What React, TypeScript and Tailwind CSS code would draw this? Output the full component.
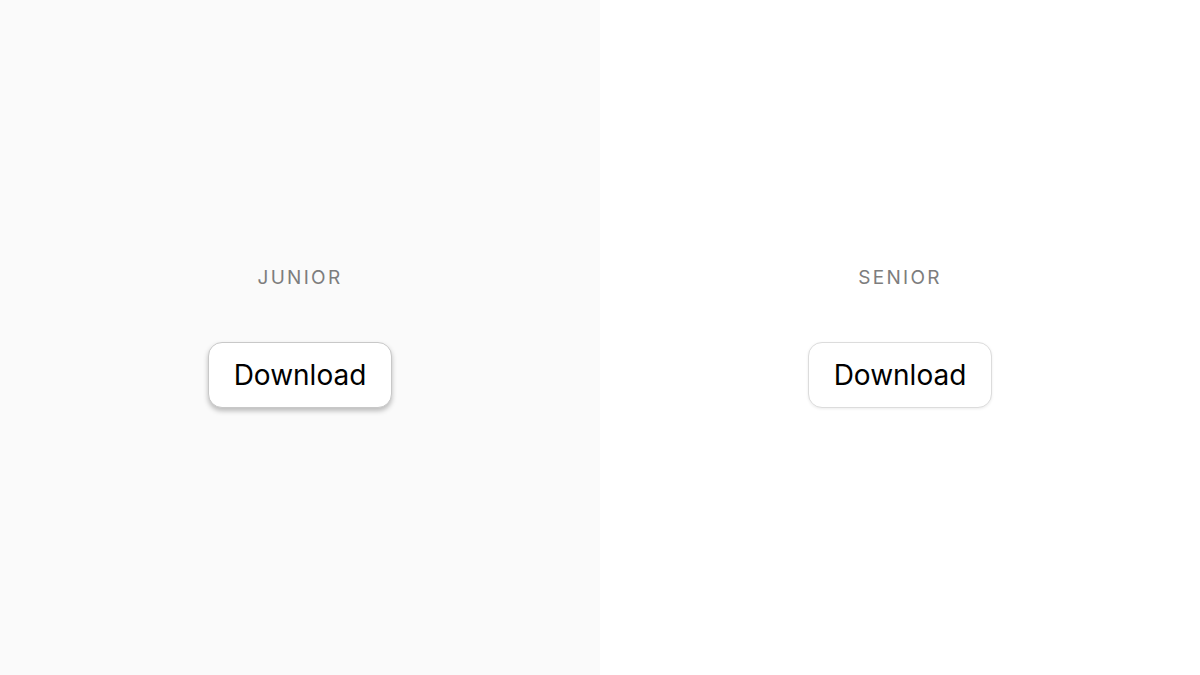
export default function App() {
  return (
    <div className="flex h-[675px] w-[1200px] font-['Inter',sans-serif]">
      <section className="flex w-1/2 flex-col items-center justify-center bg-[#fafafa] pb-[5px]">
        <p className="text-[19px] leading-8 tracking-[0.12em] text-[#7d7d7d]">JUNIOR</p>
        <button className="mt-[48px] rounded-[14px] border border-[#c8c8c8] bg-white px-[25px] py-4 text-[28px] leading-[32px] text-black shadow-[0_3px_5px_rgba(0,0,0,0.25)]">
          Download
        </button>
      </section>
      <section className="flex w-1/2 flex-col items-center justify-center bg-white pb-[5px]">
        <p className="text-[19px] leading-8 tracking-[0.12em] text-[#7d7d7d]">SENIOR</p>
        <button className="mt-[48px] rounded-[14px] border border-[#dcdcdc] bg-white px-[25px] py-4 text-[28px] leading-[32px] text-black shadow-[0_1px_3px_rgba(0,0,0,0.08)]">
          Download
        </button>
      </section>
    </div>
  );
}
